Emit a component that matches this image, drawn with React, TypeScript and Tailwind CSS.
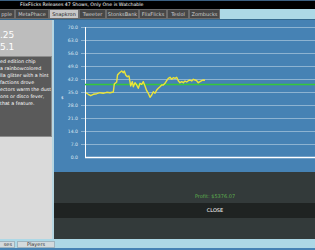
import React from 'react';

const tabs = [
  { label: 'pple', w: 'w-[15px]', cut: true },
  { label: 'MetaPhace', w: 'w-[34px]' },
  { label: 'Snapkron', w: 'w-[30px]', active: true },
  { label: 'Tweeter', w: 'w-[27px]' },
  { label: 'StonksBank', w: 'w-[33px]' },
  { label: 'FlixFlicks', w: 'w-[28px]' },
  { label: 'Teslol', w: 'w-[22px]' },
  { label: 'Zombucks', w: 'w-[31px]' },
];

const blurb = [
  'ed edition chip',
  'a rainbowcolored',
  'lla glitter with a hint',
  'factions drove',
  'ectors warm the dust',
  'ons or disco fever,',
  'that a feature.',
];

// price history, page coords (chart origin is at 54,20)
const prices: [number, number][] = [
  [86, 92.7], [88.3, 94.3], [90.7, 95.7], [93.3, 94.3], [96.7, 93.7], [100, 92.7], [103.3, 93.3],
  [106.7, 92.3], [110, 92.7], [113.3, 92], [114.3, 84], [116.7, 82], [117.5, 75], [119, 73.3],
  [121.7, 71], [123.3, 72.7], [124.3, 71], [125.7, 75], [127.3, 76.7], [129, 76], [130.7, 86],
  [132.3, 81.7], [133.3, 86.7], [135, 82.7], [136.7, 85], [138.3, 88.3], [140, 83.3], [141.7, 84.3],
  [143.3, 81.7], [145, 86], [146.7, 90.7], [148.3, 93.3], [150, 97.3], [151.7, 95], [153.3, 91.7],
  [155, 93.3], [156.7, 90], [158.3, 88.3], [160, 86.7], [161.7, 85], [163.3, 85], [165, 83.3],
  [166.7, 80.7], [168.3, 78.3], [170, 77.3], [171.7, 79.3], [173.3, 77.7], [175, 78.3], [176.7, 77.3],
  [178.3, 80.7], [180, 82.7], [181.7, 81.7], [183.3, 82.7], [185, 81], [186.7, 82], [188.3, 80.7],
  [190, 80], [191.7, 81], [193.3, 79.3], [195, 80], [196.7, 80.7], [198.3, 82.7], [200, 81.7],
  [201.7, 80.7], [203.3, 80], [205, 80.3],
];

const ticks = ['70.0', '63.0', '56.0', '49.0', '42.0', '35.0', '28.0', '21.0', '14.0', '7.0', '0.0'];

const PriceChart = () => (
  <svg width="261" height="152" className="block">
    {ticks.slice(0, 10).map((_, i) => (
      <line key={i} x1="27" x2="261" y1={7.5 + 13 * i} y2={7.5 + 13 * i} stroke="#8db3d1" strokeWidth="1" />
    ))}
    {ticks.map((t, i) => (
      <text
        key={t}
        x="24"
        y={7.5 + 13 * i}
        textAnchor="end"
        dominantBaseline="middle"
        fontSize="4.6"
        fill="#dde8f1"
        fontFamily="DejaVu Sans, sans-serif"
      >
        {t}
      </text>
    ))}
    <text x="7" y="79" fontSize="4" fill="#ffffff" fontFamily="DejaVu Sans, sans-serif">$</text>
    <line x1="31.5" x2="31.5" y1="7" y2="138" stroke="#ffffff" strokeWidth="1" />
    <line x1="31" x2="261" y1="137.5" y2="137.5" stroke="#ffffff" strokeWidth="1.5" />
    <line x1="31" x2="261" y1="64.5" y2="64.5" stroke="#35c83a" strokeWidth="1.5" />
    <polyline
      points={prices.map(([x, y]) => `${x - 54},${y - 20}`).join(' ')}
      fill="none"
      stroke="#ece43a"
      strokeWidth="1.4"
      strokeLinejoin="round"
    />
  </svg>
);

export default function App() {
  return (
    <div className="w-[315px] h-[250px] overflow-hidden flex flex-col bg-[#add8e6] font-['DejaVu_Sans',sans-serif] text-[5px] leading-none">
      <div className="h-[1px] bg-[#3b5f80]" />
      <div className="h-[8px] bg-black text-white text-[4.7px] flex items-center pl-[20px]">
        FlixFlicks Releases 47 Shows, Only One is Watchable
      </div>
      <div className="h-[10px] flex bg-[#add8e6]">
        {tabs.map((t) => (
          <div
            key={t.label}
            className={`${t.w} h-full flex items-center border border-[#6c6c6c] ${
              t.cut ? 'justify-end pr-[2px] border-l-0' : 'justify-center'
            } ${t.active ? 'bg-[#c8c8c8] text-[#222]' : 'bg-[#474747] text-[#cfcfcf]'}`}
          >
            {t.label}
          </div>
        ))}
      </div>
      <div className="h-[1px] bg-[#35698f]" />
      <div className="flex h-[219px]">
        <div className="w-[52px] flex flex-col bg-[#dadada]">
          <div className="h-[36px] bg-[#bdbdbd] text-white text-[9px] flex flex-col pt-[11px] gap-[3px]">
            <div>.25</div>
            <div>5.1</div>
          </div>
          <div className="h-[81px] bg-[#5a5a5a] border border-[#8c8c8c] border-l-0 text-white text-[4.8px] pt-[2px] flex flex-col">
            {blurb.map((l) => (
              <div key={l} className="h-[7px] flex items-center whitespace-nowrap overflow-hidden">
                {l}
              </div>
            ))}
          </div>
        </div>
        <div className="w-[2px] bg-[#b6d6e2]" />
        <div className="flex-1 flex flex-col">
          <div className="h-[152px] bg-[#4682b4]">
            <PriceChart />
          </div>
          <div className="flex-1 bg-[#333a3a] flex flex-col pl-[61px] text-center">
            <div className="h-[31px] flex items-end justify-center pb-[4px] text-[#5fb14f]">
              Profit: $5376.07
            </div>
            <div className="h-[15px] bg-[#1f2322] text-white flex items-center justify-center -ml-[61px] pl-[61px]">
              CLOSE
            </div>
          </div>
        </div>
      </div>
      <div className="h-[9px] flex items-end gap-[2px] pt-[2px] bg-[#add8e6]">
        <div className="w-[15px] h-full bg-[#d3dadd] border border-[#9fb4bf] border-l-0 flex items-center justify-end pr-[2px] text-[#333]">
          ses
        </div>
        <div className="w-[38px] h-full bg-[#d3dadd] border border-[#9fb4bf] flex items-center justify-center text-[#333]">
          Players
        </div>
      </div>
      <div className="h-[2px] bg-[#4682b4]" />
    </div>
  );
}
